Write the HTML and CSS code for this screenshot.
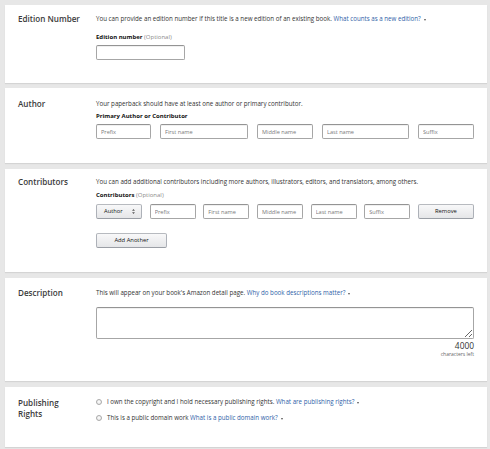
FILE: index.html
```html
<!DOCTYPE html>
<html>
<head>
<meta charset="utf-8">
<title>Book details</title>
<link rel="stylesheet" href="styles.css">
</head>
<body>
<section class="card card-edition">
  <h2 class="card-label">Edition Number</h2>
  <div class="card-body">
    <p class="help">You can provide an edition number if this title is a new edition of an existing book. <a class="link">What counts as a new edition?</a><span class="caret"></span></p>
    <div class="field-label field-label-edition"><b>Edition number</b> <span class="optional">(Optional)</span></div>
    <input class="text edition-input" type="text">
  </div>
</section>

<section class="card card-author">
  <h2 class="card-label">Author</h2>
  <div class="card-body">
    <p class="help">Your paperback should have at least one author or primary contributor.</p>
    <div class="field-label field-label-author"><b>Primary Author or Contributor</b></div>
    <div class="name-row">
      <input class="text" type="text" placeholder="Prefix">
      <input class="text" type="text" placeholder="First name">
      <input class="text" type="text" placeholder="Middle name">
      <input class="text" type="text" placeholder="Last name">
      <input class="text" type="text" placeholder="Suffix">
    </div>
  </div>
</section>

<section class="card card-contrib">
  <h2 class="card-label">Contributors</h2>
  <div class="card-body">
    <p class="help">You can add additional contributors including more authors, illustrators, editors, and translators, among others.</p>
    <div class="field-label field-label-contrib"><b>Contributors</b> <span class="optional">(Optional)</span></div>
    <div class="contrib-row">
      <button class="btn select" type="button"><span>Author</span><svg class="updown" viewBox="0 0 4 7" width="3" height="5"><path d="M2 0 L4 2.6 L0 2.6 Z M2 7 L4 4.4 L0 4.4 Z" fill="#555"/></svg></button>
      <input class="text" type="text" placeholder="Prefix">
      <input class="text" type="text" placeholder="First name">
      <input class="text" type="text" placeholder="Middle name">
      <input class="text" type="text" placeholder="Last name">
      <input class="text" type="text" placeholder="Suffix">
      <button class="btn" type="button">Remove</button>
    </div>
    <button class="btn add-btn" type="button">Add Another</button>
  </div>
</section>

<section class="card card-desc">
  <h2 class="card-label">Description</h2>
  <div class="card-body">
    <p class="help">This will appear on your book's Amazon detail page. <a class="link">Why do book descriptions matter?</a><span class="caret"></span></p>
    <textarea class="desc-area"></textarea>
    <div class="counter">
      <div class="count">4000</div>
      <div class="count-label">characters left</div>
    </div>
  </div>
</section>

<section class="card card-rights">
  <h2 class="card-label">Publishing<br>Rights</h2>
  <div class="card-body">
    <div class="radio-row"><span class="radio"></span><span>I own the copyright and I hold necessary publishing rights. <a class="link">What are publishing rights?</a><span class="caret"></span></span></div>
    <div class="radio-row"><span class="radio"></span><span>This is a public domain work <a class="link">What is a public domain work?</a><span class="caret"></span></span></div>
  </div>
</section>
</body>
</html>
```

FILE: styles.css
```css
* {
  box-sizing: border-box;
}

body {
  margin: 0;
  padding: 5px 3px 0 5px;
  background: #e7e7e7;
  font-family: "Open Sans", "Liberation Sans", sans-serif;
  color: #333;
}

.card {
  display: flex;
  background: #fff;
  margin-bottom: 6px;
  padding: 0 13px;
  box-shadow: 0 1px 1px rgba(0, 0, 0, 0.08);
}

.card-label {
  width: 78px;
  flex: none;
  margin: 0;
  padding-right: 10px;
  font-size: 8.1px;
  font-weight: 600;
  line-height: 10px;
  color: #3b3b3b;
}

.card-body {
  flex: 1;
  min-width: 0;
}

.help {
  margin: 0;
  font-size: 6.2px;
  line-height: 10px;
  color: #333;
  white-space: nowrap;
}

.link {
  color: #2f62a8;
  text-decoration: none;
}

.caret {
  display: inline-block;
  width: 0;
  height: 0;
  margin-left: 3px;
  border-left: 1.6px solid transparent;
  border-right: 1.6px solid transparent;
  border-top: 2px solid #555;
  vertical-align: 0.5px;
}

.field-label {
  font-size: 6px;
  line-height: 10px;
  color: #111;
}

.field-label b {
  font-weight: 700;
}

.optional {
  color: #8a8a8a;
}

input.text {
  display: block;
  width: 100%;
  height: 15px;
  margin: 0;
  padding: 0 4px;
  border: 1px solid #a6a6a6;
  border-top-color: #949494;
  border-radius: 2px;
  background: #fff;
  box-shadow: inset 0 1px 0 rgba(0, 0, 0, 0.06);
  font-family: "Open Sans", "Liberation Sans", sans-serif;
  font-size: 5.6px;
  color: #333;
  outline: none;
}

input.text::placeholder {
  color: #7a7a7a;
}

/* Edition card */
.card-edition {
  padding-top: 9px;
  padding-bottom: 23px;
  margin-bottom: 5px;
}

.field-label-edition {
  margin-top: 8px;
}

.edition-input {
  margin-top: 3px !important;
  width: 89px !important;
}

/* Author card */
.card-author {
  padding-top: 11px;
  padding-bottom: 24px;
}

.field-label-author {
  margin-top: 2px;
}

.name-row {
  margin-top: 3px;
  display: grid;
  grid-template-columns: 55px 88px 56px 87px 56px;
  column-gap: 9px;
}

/* Contributors card */
.card-contrib {
  padding-top: 8px;
  padding-bottom: 24px;
}

.field-label-contrib {
  margin-top: 3px;
}

.contrib-row {
  margin-top: 4px;
  display: grid;
  grid-template-columns: 46px 46px 46px 46px 46px 46px 56px;
  column-gap: 7.66px;
}

.btn {
  display: flex;
  align-items: center;
  justify-content: center;
  height: 15px;
  margin: 0;
  padding: 0 4px;
  border: 1px solid #adb1b8;
  border-top-color: #b7babf;
  border-bottom-color: #9a9ea5;
  border-radius: 2px;
  background: linear-gradient(#f8f8f9, #e5e6e8);
  font-family: "Open Sans", "Liberation Sans", sans-serif;
  font-size: 5.8px;
  color: #111;
  line-height: 1;
}

.select {
  justify-content: space-between;
  padding: 0 6px 0 7px;
}

.updown {
  display: block;
}

.add-btn {
  width: 71px;
  margin-top: 14px;
}

/* Description card */
.card-desc {
  padding-top: 10px;
  padding-bottom: 23px;
}

.desc-area {
  display: block;
  width: 100%;
  height: 32px;
  margin: 9px 0 0;
  border: 1px solid #a6a6a6;
  border-top-color: #949494;
  border-radius: 2px;
  box-shadow: inset 0 1px 0 rgba(0, 0, 0, 0.06);
  resize: vertical;
  font-family: "Open Sans", "Liberation Sans", sans-serif;
  outline: none;
}

.counter {
  margin-top: 2px;
  text-align: right;
}

.count {
  font-size: 8.4px;
  line-height: 10px;
  color: #333;
}

.count-label {
  font-size: 5px;
  line-height: 7px;
  color: #666;
}

/* Publishing rights card */
.card-rights {
  padding-top: 10px;
  padding-bottom: 24px;
}

.card-rights .card-label {
  line-height: 11px;
}

.radio-row {
  display: flex;
  align-items: center;
  height: 10px;
  margin-bottom: 6px;
  font-size: 6.2px;
  line-height: 10px;
  white-space: nowrap;
}

.radio-row:last-child {
  margin-bottom: 0;
}

.radio {
  display: inline-block;
  width: 6px;
  height: 6px;
  margin: 0 5px 0 0;
  border: 1px solid #a9a9a9;
  border-radius: 50%;
  background: radial-gradient(circle at 50% 40%, #fdfdfd, #e6e6e6);
  flex: none;
}
```
